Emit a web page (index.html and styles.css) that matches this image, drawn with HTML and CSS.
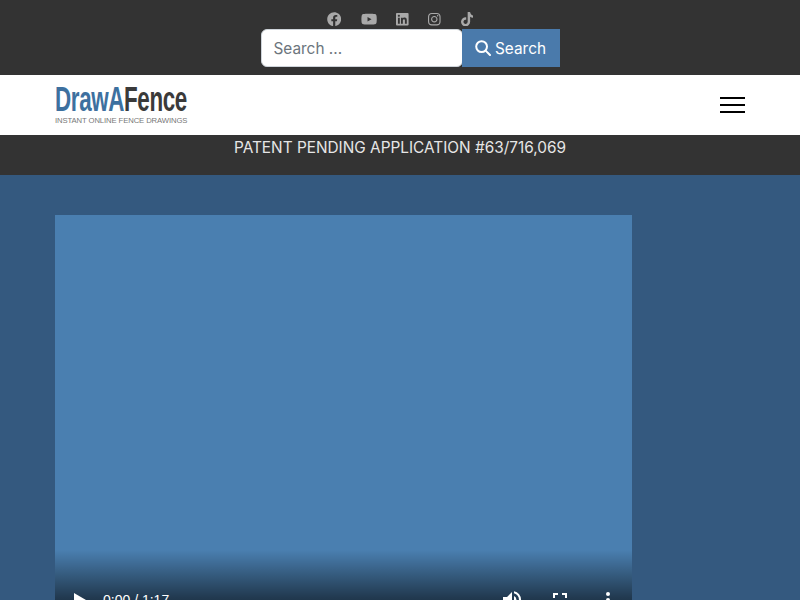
FILE: index.html
```html
<!DOCTYPE html>
<html lang="en">
<head>
<meta charset="utf-8">
<title>DrawAFence</title>
<link rel="stylesheet" href="styles.css">
</head>
<body>
<header class="topbar">
  <div class="social">
    <a class="social-link"><svg class="ico" viewBox="0 0 512 512"><path d="M504 256C504 119 393 8 256 8S8 119 8 256c0 123.78 90.69 226.38 209.25 245V327.69h-63V256h63v-54.64c0-62.15 37-96.48 93.67-96.48 27.14 0 55.52 4.84 55.52 4.84v61h-31.28c-30.8 0-40.41 19.12-40.41 38.73V256h68.78l-11 71.69h-57.78V501C413.31 482.38 504 379.78 504 256z"/></svg></a>
    <a class="social-link"><svg class="ico ico-yt" viewBox="0 0 576 512"><path d="M549.655 124.083c-6.281-23.65-24.787-42.276-48.284-48.597C458.781 64 288 64 288 64S117.22 64 74.629 75.486c-23.497 6.322-42.003 24.947-48.284 48.597-11.412 42.867-11.412 132.305-11.412 132.305s0 89.438 11.412 132.305c6.281 23.65 24.787 41.5 48.284 47.821C117.22 448 288 448 288 448s170.78 0 213.371-11.486c23.497-6.321 42.003-24.171 48.284-47.821 11.412-42.867 11.412-132.305 11.412-132.305s0-89.438-11.412-132.305zm-317.51 213.508V175.185l142.739 81.205-142.739 81.201z"/></svg></a>
    <a class="social-link"><svg class="ico ico-sq" viewBox="0 0 448 512"><path d="M416 32H31.9C14.3 32 0 46.5 0 64.3v383.4C0 465.5 14.3 480 31.9 480H416c17.6 0 32-14.5 32-32.3V64.3c0-17.8-14.4-32.3-32-32.3zM135.4 416H69V202.2h66.5V416zm-33.2-243c-21.3 0-38.5-17.3-38.5-38.5S80.9 96 102.2 96c21.2 0 38.5 17.3 38.5 38.5 0 21.3-17.2 38.5-38.5 38.5zm282.1 243h-66.4V312c0-24.8-.5-56.7-34.5-56.7-34.6 0-39.9 27-39.9 54.9V416h-66.4V202.2h63.7v29.2h.9c8.9-16.8 30.6-34.5 62.9-34.5 67.2 0 79.7 44.3 79.7 101.9V416z"/></svg></a>
    <a class="social-link"><svg class="ico ico-sq" viewBox="0 0 448 512"><path d="M224.1 141c-63.6 0-114.9 51.3-114.9 114.9s51.3 114.9 114.9 114.9S339 319.5 339 255.9 287.7 141 224.1 141zm0 189.6c-41.1 0-74.7-33.5-74.7-74.7s33.5-74.7 74.7-74.7 74.7 33.5 74.7 74.7-33.6 74.7-74.7 74.7zm146.4-194.3c0 14.9-12 26.8-26.8 26.8-14.9 0-26.8-12-26.8-26.8s12-26.8 26.8-26.8 26.8 12 26.8 26.8zm76.1 27.2c-1.7-35.9-9.9-67.7-36.2-93.9-26.2-26.2-58-34.4-93.9-36.2-37-2.1-147.9-2.1-184.9 0-35.8 1.7-67.6 9.9-93.9 36.1s-34.4 58-36.2 93.9c-2.1 37-2.1 147.9 0 184.9 1.7 35.9 9.9 67.7 36.2 93.9s58 34.4 93.9 36.2c37 2.1 147.9 2.1 184.9 0 35.9-1.7 67.7-9.9 93.9-36.2 26.2-26.2 34.4-58 36.2-93.9 2.1-37 2.1-147.8 0-184.8zM398.8 388c-7.8 19.6-22.9 34.7-42.6 42.6-29.5 11.7-99.5 9-132.1 9s-102.7 2.6-132.1-9c-19.6-7.8-34.7-22.9-42.6-42.6-11.7-29.5-9-99.5-9-132.1s-2.6-102.7 9-132.1c7.8-19.6 22.9-34.7 42.6-42.6 29.5-11.7 99.5-9 132.1-9s102.7-2.6 132.1 9c19.6 7.8 34.7 22.9 42.6 42.6 11.7 29.5 9 99.5 9 132.1s2.7 102.7-9 132.1z"/></svg></a>
    <a class="social-link"><svg class="ico ico-sq" viewBox="0 0 448 512"><path d="M448,209.91a210.06,210.06,0,0,1-122.77-39.25V349.38A162.55,162.55,0,1,1,185,188.31V278.2a74.62,74.62,0,1,0,52.23,71.18V0l88,0a121.18,121.18,0,0,0,1.86,22.17h0A122.18,122.18,0,0,0,381,102.39a121.43,121.43,0,0,0,67,20.14Z"/></svg></a>
  </div>
  <form class="search">
    <input class="search-input" type="text" placeholder="Search ...">
    <button class="search-btn" type="button">
      <svg class="search-ico" viewBox="0 0 16 16"><circle cx="6.6" cy="6.6" r="5.4"/><path d="M10.6 10.6 15 15"/></svg>
      <span>Search</span>
    </button>
  </form>
</header>
<nav class="navbar">
  <a class="logo">
    <span class="logo-name"><span class="logo-blue">DrawA</span>Fence</span>
    <span class="logo-tag">INSTANT ONLINE FENCE DRAWINGS</span>
  </a>
  <button class="burger" type="button" aria-label="Menu"><i></i><i></i><i></i></button>
</nav>
<div class="patent">PATENT PENDING APPLICATION #63/716,069</div>
<main class="main">
  <div class="video">
    <div class="controls">
      <svg class="play" viewBox="0 0 12 14"><path d="M0 0 12 7 0 14z"/></svg>
      <span class="time">0:00 / 1:17</span>
      <span class="spacer"></span>
      <svg class="ctl ctl-vol" viewBox="0 0 24 24"><path d="M3 9v6h4l5 5V4L7 9H3zm13.5 3A4.5 4.5 0 0 0 14 8v8a4.5 4.5 0 0 0 2.5-4zM14 3.2v2.1a7 7 0 0 1 0 13.4v2.1a9 9 0 0 0 0-17.6z"/></svg>
      <svg class="ctl ctl-full" viewBox="0 0 24 24"><path d="M7 14H5v5h5v-2H7v-3zm-2-4h2V7h3V5H5v5zm12 7h-3v2h5v-5h-2v3zM14 5v2h3v3h2V5h-5z"/></svg>
      <svg class="ctl ctl-more" viewBox="0 0 24 24"><path d="M12 8a2 2 0 1 0 0-4 2 2 0 0 0 0 4zm0 2a2 2 0 1 0 0 4 2 2 0 0 0 0-4zm0 6a2 2 0 1 0 0 4 2 2 0 0 0 0-4z"/></svg>
    </div>
  </div>
</main>
</body>
</html>
```
FILE: styles.css
```css
* { box-sizing: border-box; }
html, body { margin: 0; }
body {
  background: #34597f;
  font-family: Inter, "Liberation Sans", sans-serif;
  color: #fff;
}
.topbar {
  height: 75px;
  background: #333;
  display: flex;
  flex-direction: column;
  align-items: center;
  padding-top: 9px;
}
.social {
  display: flex;
  height: 20px;
  align-items: center;
  gap: 19.5px;
}
.social-link { display: flex; align-items: center; }
.ico { height: 14.4px; width: 14.4px; fill: #a9a9a9; display: block; }
.ico-yt { width: 16.2px; }
.ico-sq { width: 12.6px; }
.search { display: flex; height: 38px; width: 299px; margin-left: 20px; }
.search-input {
  width: 202px;
  height: 38px;
  border: 1px solid #ced4da;
  border-radius: 6px;
  padding: 6px 12px;
  font: 15.36px Inter, sans-serif;
  color: #333;
  background: #fff;
  outline: none;
}
.search-input::placeholder { color: #6c757d; opacity: 1; }
.search-btn {
  flex: 1;
  margin-left: -1px;
  height: 38px;
  border: 0;
  background: #4a7aab;
  color: #fff;
  font: 15.36px Inter, sans-serif;
  display: flex;
  align-items: center;
  justify-content: center;
  gap: 4px;
  padding: 0;
}
.search-ico {
  width: 16px;
  height: 16px;
  fill: none;
  stroke: #fff;
  stroke-width: 2;
  stroke-linecap: round;
}
.navbar {
  height: 60px;
  background: #fff;
  display: flex;
  align-items: center;
  justify-content: space-between;
  padding: 0 55px;
}
.logo { display: flex; flex-direction: column; width: 133px; padding-bottom: 2px; }
.logo-name {
  font: bold 35px/31px "Liberation Sans", sans-serif;
  letter-spacing: -0.6px;
  color: #3a3a3a;
  white-space: nowrap;
  transform: scaleX(.64);
  transform-origin: left center;
}
.logo-blue { color: #3d709f; }
.logo-tag {
  margin-top: 2px;
  font: 7.7px/9px "Liberation Sans", sans-serif;
  letter-spacing: -0.1px;
  color: #777;
  white-space: nowrap;
}
.burger {
  width: 25px;
  height: 16px;
  padding: 0;
  border: 0;
  background: none;
  display: flex;
  flex-direction: column;
  justify-content: space-between;
}
.burger i { display: block; height: 2px; background: #000; }
.patent {
  height: 40px;
  padding-top: 1px;
  background: #333;
  color: #e6e6e6;
  font-size: 15.36px;
  line-height: 24px;
  text-align: center;
}
.main { padding: 40px 168px 40px 55px; }
.video { position: relative; height: 403px; background: #4a7fb0; }
.controls {
  position: absolute;
  left: 0;
  right: 0;
  bottom: 0;
  height: 68px;
  padding: 32px 12px 0 19px;
  background: linear-gradient(to bottom, rgba(0,0,0,0), rgba(0,0,0,.55) 70%, rgba(0,0,0,.7));
  display: flex;
  align-items: center;
  color: #fff;
}
.play { width: 12px; height: 14px; fill: #fff; }
.time { margin-left: 17px; font: 14px "Liberation Sans", sans-serif; color: #fff; }
.spacer { flex: 1; }
.ctl { width: 24px; height: 24px; fill: #fff; }
.ctl-full { margin-left: 24px; }
.ctl-more { margin-left: 24px; }
```
